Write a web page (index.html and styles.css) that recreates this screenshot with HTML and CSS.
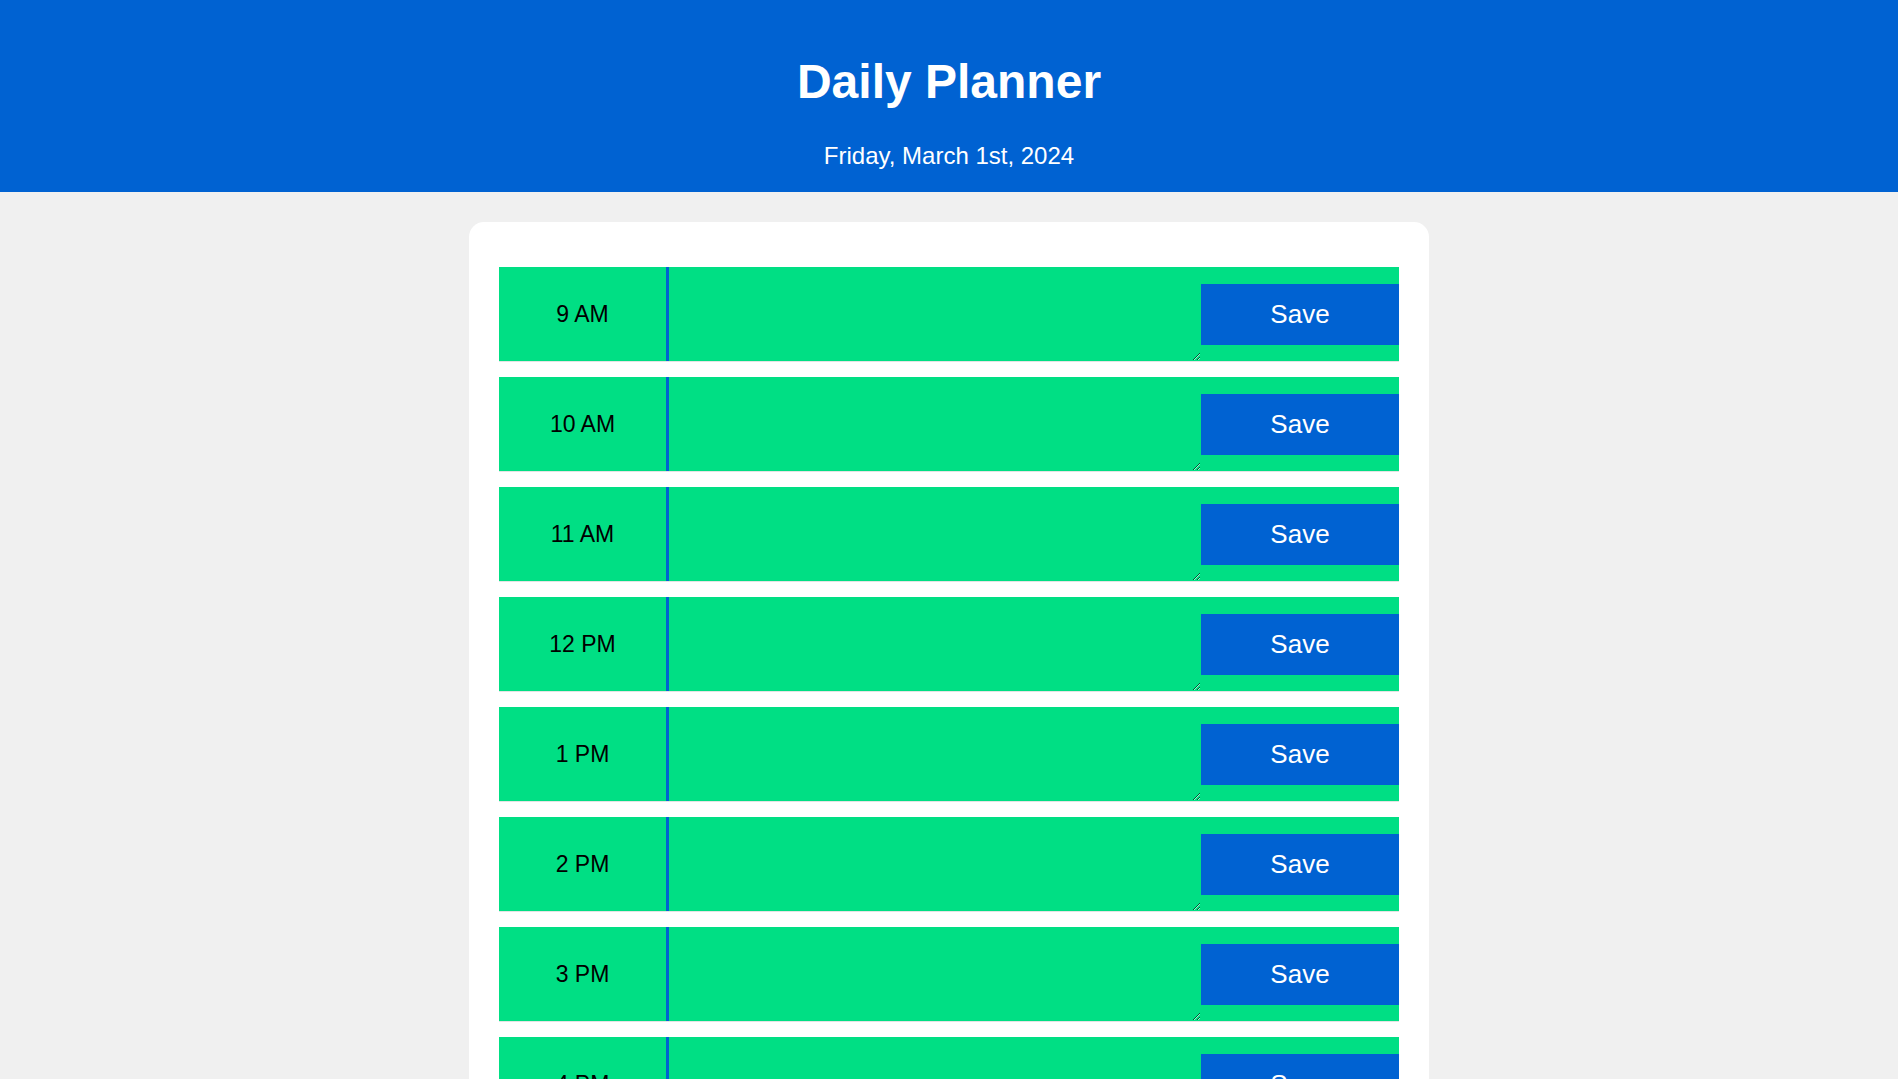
FILE: index.html
```html
<!DOCTYPE html>
<html lang="en">
<head>
<meta charset="utf-8">
<title>Daily Planner</title>
<link rel="stylesheet" href="styles.css">
</head>
<body>
<header class="top">
  <h1 class="title">Daily Planner</h1>
  <p class="date">Friday, March 1st, 2024</p>
</header>
<main class="planner">
  <div class="row"><div class="hour">9 AM</div><textarea class="task"></textarea><button class="save">Save</button></div>
  <div class="row"><div class="hour">10 AM</div><textarea class="task"></textarea><button class="save">Save</button></div>
  <div class="row"><div class="hour">11 AM</div><textarea class="task"></textarea><button class="save">Save</button></div>
  <div class="row"><div class="hour">12 PM</div><textarea class="task"></textarea><button class="save">Save</button></div>
  <div class="row"><div class="hour">1 PM</div><textarea class="task"></textarea><button class="save">Save</button></div>
  <div class="row"><div class="hour">2 PM</div><textarea class="task"></textarea><button class="save">Save</button></div>
  <div class="row"><div class="hour">3 PM</div><textarea class="task"></textarea><button class="save">Save</button></div>
  <div class="row"><div class="hour">4 PM</div><textarea class="task"></textarea><button class="save">Save</button></div>
  <div class="row"><div class="hour">5 PM</div><textarea class="task"></textarea><button class="save">Save</button></div>
</main>
</body>
</html>
```
FILE: styles.css
```css
html, body {
  margin: 0;
  padding: 0;
}
body {
  background: #f0f0f0;
  font-family: "Liberation Sans", Arial, sans-serif;
  color: #000;
}
.top {
  background: #0062d2;
  color: #fff;
  text-align: center;
  padding: 54px 0 22px;
}
.title {
  margin: 0 0 32px;
  font-size: 48px;
  line-height: 56px;
  font-weight: bold;
}
.date {
  margin: 0;
  font-size: 24px;
  line-height: 28px;
}
.planner {
  width: 900px;
  margin: 30px auto 0;
  padding: 45px 30px 30px;
  background: #fff;
  border-radius: 15px;
  display: flex;
  flex-direction: column;
  gap: 15px;
}
.row {
  display: grid;
  grid-template-columns: 167px 535px 198px;
  height: 94px;
  background: #00df84;
  border-bottom: 1px solid #e4e4e4;
}
.hour {
  display: flex;
  align-items: center;
  justify-content: center;
  font-size: 23px;
}
.task {
  box-sizing: border-box;
  margin: 0;
  height: 94px;
  width: 535px;
  background: #00df84;
  border: none;
  border-left: 3px solid #0062d2;
  padding: 10px;
  font-family: "Liberation Sans", Arial, sans-serif;
  font-size: 18px;
  outline: none;
}
.save {
  align-self: center;
  height: 61px;
  margin: 0;
  background: #0062d2;
  color: #fff;
  border: none;
  font-family: "Liberation Sans", Arial, sans-serif;
  font-size: 26px;
  cursor: pointer;
}
```
